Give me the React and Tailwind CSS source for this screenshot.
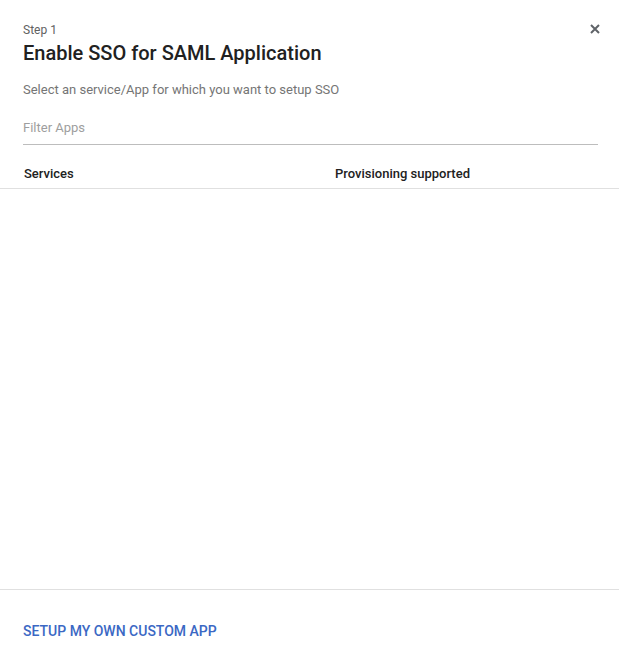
export default function App() {
  return (
    <div className="w-[619px] h-[658px] bg-white flex flex-col font-['Roboto',sans-serif] relative">
      <button className="absolute right-[17px] top-[22px] w-[14px] h-[14px] flex items-center justify-center">
        <svg width="10" height="10" viewBox="0 0 10 10">
          <path d="M1 1L9 9M9 1L1 9" stroke="#5f6368" strokeWidth="2" />
        </svg>
      </button>
      <div className="pl-[23px] pr-[21px] pt-[22px]">
        <div className="text-[12px] leading-[16px] text-[#616161]">Step 1</div>
        <div className="text-[20px] leading-[28px] font-medium text-[#212121] mt-[1px]">Enable SSO for SAML Application</div>
        <div className="text-[13px] leading-[18px] text-[#757575] mt-[14px]">Select an service/App for which you want to setup SSO</div>
        <div className="mt-[20px] border-b border-[#bdbdbd] pb-[7px] text-[13px] leading-[18px] text-[#9e9e9e]">Filter Apps</div>
      </div>
      <div className="mt-[20px] border-b border-[#e0e0e0] flex px-[24px] pb-[5px] text-[13px] leading-[18px] font-medium text-[#212121]">
        <div className="w-[311px]">Services</div>
        <div>Provisioning supported</div>
      </div>
      <div className="flex-1" />
      <div className="border-t border-[#e0e0e0] h-[69px] px-[23px] pt-[31px]">
        <div className="text-[14px] leading-[20px] font-medium text-[#3b68c4]">SETUP MY OWN CUSTOM APP</div>
      </div>
    </div>
  );
}
